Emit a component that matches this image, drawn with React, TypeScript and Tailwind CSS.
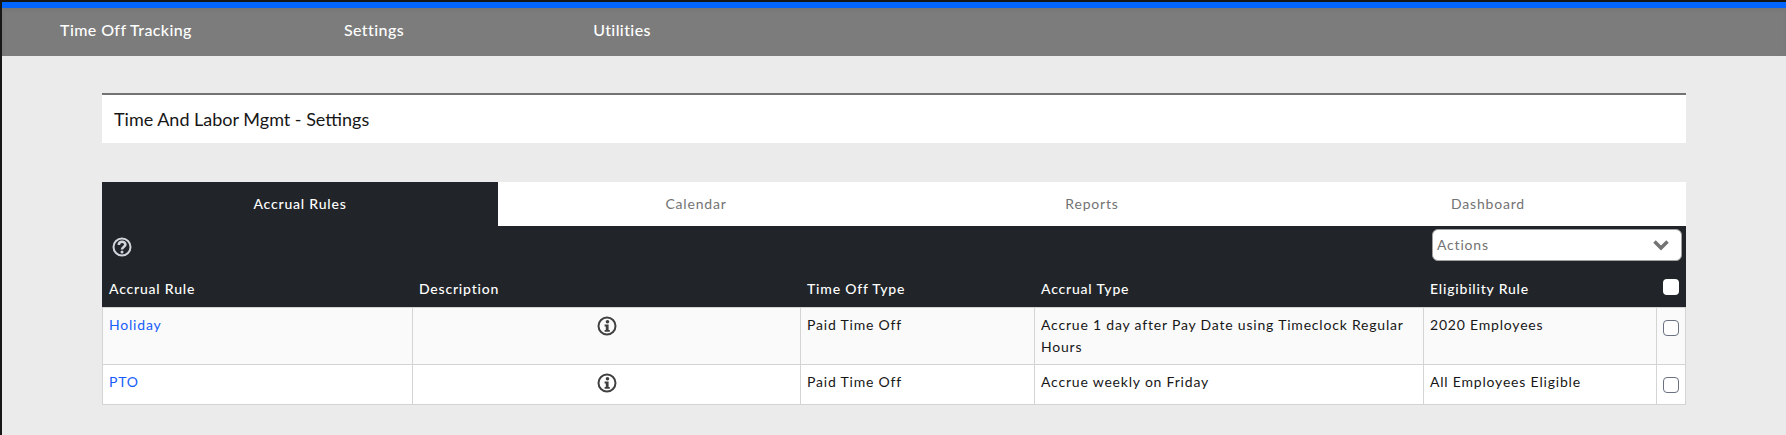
import React from 'react';

const gridCols = 'grid grid-cols-[310px_388px_234px_389px_233px_1fr]';

function HelpIcon() {
  return (
    <svg viewBox="0 0 20 20" className="w-5 h-5 text-gray-300" fill="none" stroke="currentColor">
      <circle cx="10" cy="10" r="8.500" strokeWidth="2" />
      <path d="M6.800 8c0-4.200 6.600-4.200 6.600-.4 0 2.400-3.400 2.400-3.400 4.800" strokeWidth="2.600" />
      <circle cx="10" cy="15" r="1.500" fill="currentColor" stroke="none" />
    </svg>
  );
}

function InfoIcon() {
  return (
    <svg viewBox="0 0 20 20" className="w-5 h-5 text-neutral-700" fill="none" stroke="currentColor">
      <circle cx="10" cy="10" r="8.500" strokeWidth="2" />
      <circle cx="10.500" cy="5.800" r="1.800" fill="currentColor" stroke="none" />
      <path d="M7.600 8.600h4v5.400h1.200v1.800H7.600V14h1.200v-3.600H7.600z" fill="currentColor" stroke="none" />
    </svg>
  );
}

function Checkbox({ filled }: { filled?: boolean }) {
  return (
    <input
      type="checkbox"
      readOnly
      className={
        filled
          ? 'appearance-none block w-4 h-4 rounded bg-white'
          : 'appearance-none block w-4 h-4 rounded bg-white border border-gray-500'
      }
    />
  );
}

const rows = [
  {
    name: 'Holiday',
    type: 'Paid Time Off',
    accrual: 'Accrue 1 day after Pay Date using Timeclock Regular Hours',
    rule: '2020 Employees',
    bg: 'bg-neutral-50 border-t',
  },
  {
    name: 'PTO',
    type: 'Paid Time Off',
    accrual: 'Accrue weekly on Friday',
    rule: 'All Employees Eligible',
    bg: 'bg-white',
  },
];

const navItems = ['Time Off Tracking', 'Settings', 'Utilities'];
const tabs = ['Calendar', 'Reports', 'Dashboard'];
const headers = ['Accrual Rule', 'Description', 'Time Off Type', 'Accrual Type', 'Eligibility Rule'];

export default function App() {
  return (
    <div
      className="min-h-screen bg-[#ebebeb] border-l-2 border-t-2 border-neutral-900 tracking-wider"
      style={{ fontFamily: '"Lato", "Liberation Sans", sans-serif' }}
    >
      {/* Top bar */}
      <div className="h-1.5 bg-[#0066ff]" />
      <nav className="flex h-12 bg-[#7c7c7c] shadow-inner">
        {navItems.map((item) => (
          <div key={item} className="w-62 pt-2.5 text-center text-base font-medium tracking-wide text-white">
            {item}
          </div>
        ))}
      </nav>

      <main className="px-25 pt-px">
        {/* Title */}
        <div className="mt-9 border-t-2 border-neutral-500 bg-white px-3 py-3 text-lg leading-6 tracking-normal text-neutral-900">
          Time And Labor Mgmt - Settings
        </div>

        {/* Tabs */}
        <div className="mt-9.75 grid grid-cols-4 bg-white text-sm">
          <div className="flex h-11 items-center justify-center bg-[#212529] font-medium text-white">Accrual Rules</div>
          {tabs.map((tab) => (
            <div key={tab} className="flex h-11 items-center justify-center text-neutral-500">
              {tab}
            </div>
          ))}
        </div>

        {/* Table */}
        <div className="bg-[#212529]">
          <div className="flex h-10 items-center justify-between pb-0.5 pl-2.5 pr-1">
            <div className="mt-1">
              <HelpIcon />
            </div>
            <div className="flex h-8 w-62.5 items-center justify-between rounded-md border border-neutral-400 bg-white pl-1 pr-3 text-sm text-neutral-500">
              Actions
              <svg viewBox="0 0 16 10" className="h-3 w-4 text-neutral-500" fill="none" stroke="currentColor" strokeWidth="3.500">
                <path d="M1.500 1.500 8 8l6.500-6.500" />
              </svg>
            </div>
          </div>
          <div className={`${gridCols} text-sm leading-normal font-medium text-white`}>
            {headers.map((h) => (
              <div key={h} className="border-l border-[#212529] px-1.5 pb-2 pt-3">
                {h}
              </div>
            ))}
            <div className="flex items-center justify-center">
              <Checkbox filled />
            </div>
          </div>
        </div>

        {rows.map((row) => (
          <div key={row.name} className={`${gridCols} ${row.bg} min-h-10 border-b border-neutral-300 text-sm leading-5.5 text-neutral-900`}>
            <div className="border-l border-neutral-300 p-1.5 text-blue-600">{row.name}</div>
            <div className="flex justify-center border-l border-neutral-300 pt-2">
              <InfoIcon />
            </div>
            <div className="border-l border-neutral-300 p-1.5">{row.type}</div>
            <div className="border-l border-neutral-300 p-1.5">{row.accrual}</div>
            <div className="border-l border-neutral-300 p-1.5">{row.rule}</div>
            <div className="flex justify-center border-x border-neutral-300 pt-3">
              <Checkbox />
            </div>
          </div>
        ))}
      </main>
    </div>
  );
}
